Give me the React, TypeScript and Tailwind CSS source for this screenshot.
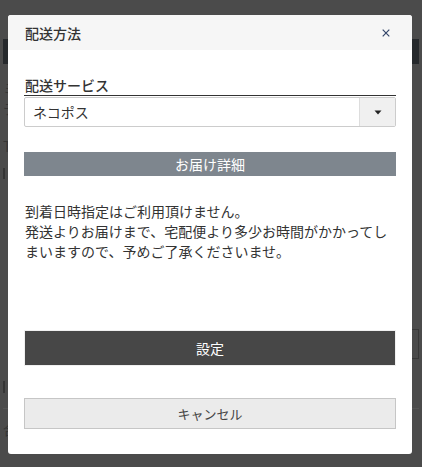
import React from "react";

const font = { fontFamily: '"Noto Sans CJK JP", "Noto Sans", sans-serif' };

export default function App() {
  return (
    <div className="relative w-[422px] h-[467px] overflow-hidden bg-[#4b4b4b]" style={font}>
      {/* dimmed page behind */}
      <div className="flex flex-col px-[3px] text-[#2e2e2e]">
        <div className="mt-[39px] h-[25px] bg-[#26292c]" />
        <div className="mt-[14px] text-[14px] leading-[20px] text-[#353535]">ミ</div>
        <div className="text-[14px] leading-[20px] text-[#353535]">テ</div>
        <div className="mt-[18px] text-[14px] leading-[20px] text-[#353535]">T</div>
        <div className="mt-[12px] h-[11px] w-[2px] bg-[#353535]" />
        <div className="mt-[150px] ml-auto h-[30px] w-[8px] border border-[#383838]" />
        <div className="mt-[22px] h-[12px] w-[2px] bg-[#353535]" />
        <div className="mt-[15px] h-px bg-[#555555]" />
        <div className="mt-[10px] text-[14px] leading-[20px] text-[#353535]">合</div>
      </div>

      {/* modal */}
      <div className="absolute left-[8px] top-[15px] w-[404px] h-[439px] bg-white rounded-[3px] overflow-hidden flex flex-col">
        <div className="h-[35px] bg-[#f6f6f6] flex items-center justify-between pl-[17px] pr-[22px] shrink-0">
          <span className="text-[14px] font-medium text-[#333333] leading-[20px]">配送方法</span>
          <svg width="8" height="8" viewBox="0 0 8 8">
            <path d="M0.7 0.7L7.3 7.3M7.3 0.7L0.7 7.3" stroke="#34476a" strokeWidth="1.2" />
          </svg>
        </div>
        <div className="flex flex-col px-[16px] pt-[25px] pb-[24px]">
          <div className="text-[14px] font-medium leading-[20px] text-[#333333] border-b border-[#333333] pl-px">
            配送サービス
          </div>
          <div className="mt-px h-[30px] flex border border-[#cccccc] rounded-[2px] overflow-hidden">
            <div className="flex-1 flex items-center pl-[8px] text-[14px] text-[#333333]">ネコポス</div>
            <div className="w-[36px] bg-[#f0f0f0] border-l border-[#dddddd] flex items-center justify-center">
              <svg width="8" height="5" viewBox="0 0 8 5">
                <path d="M0.5 0.5H7.5L4 4.5Z" fill="#222222" />
              </svg>
            </div>
          </div>
          <div className="mt-[25px] h-[24px] bg-[#7e868e] flex items-center justify-center text-white text-[14px]">
            お届け詳細
          </div>
          <p className="mt-[25px] text-[14px] leading-[20px] text-[#333333] pl-px">
            到着日時指定はご利用頂けません。
            <br />
            発送よりお届けまで、宅配便より多少お時間がかかってしまいますので、予めご了承くださいませ。
          </p>
          <button className="mt-[69px] h-[36px] bg-[#474747] border border-[#f0f0f0] text-white text-[14px] flex items-center justify-center">
            設定
          </button>
          <button className="mt-[32px] h-[31px] bg-[#ebebeb] border border-[#c6c6c6] text-[#444444] text-[13px] flex items-center justify-center">
            キャンセル
          </button>
        </div>
      </div>
    </div>
  );
}
